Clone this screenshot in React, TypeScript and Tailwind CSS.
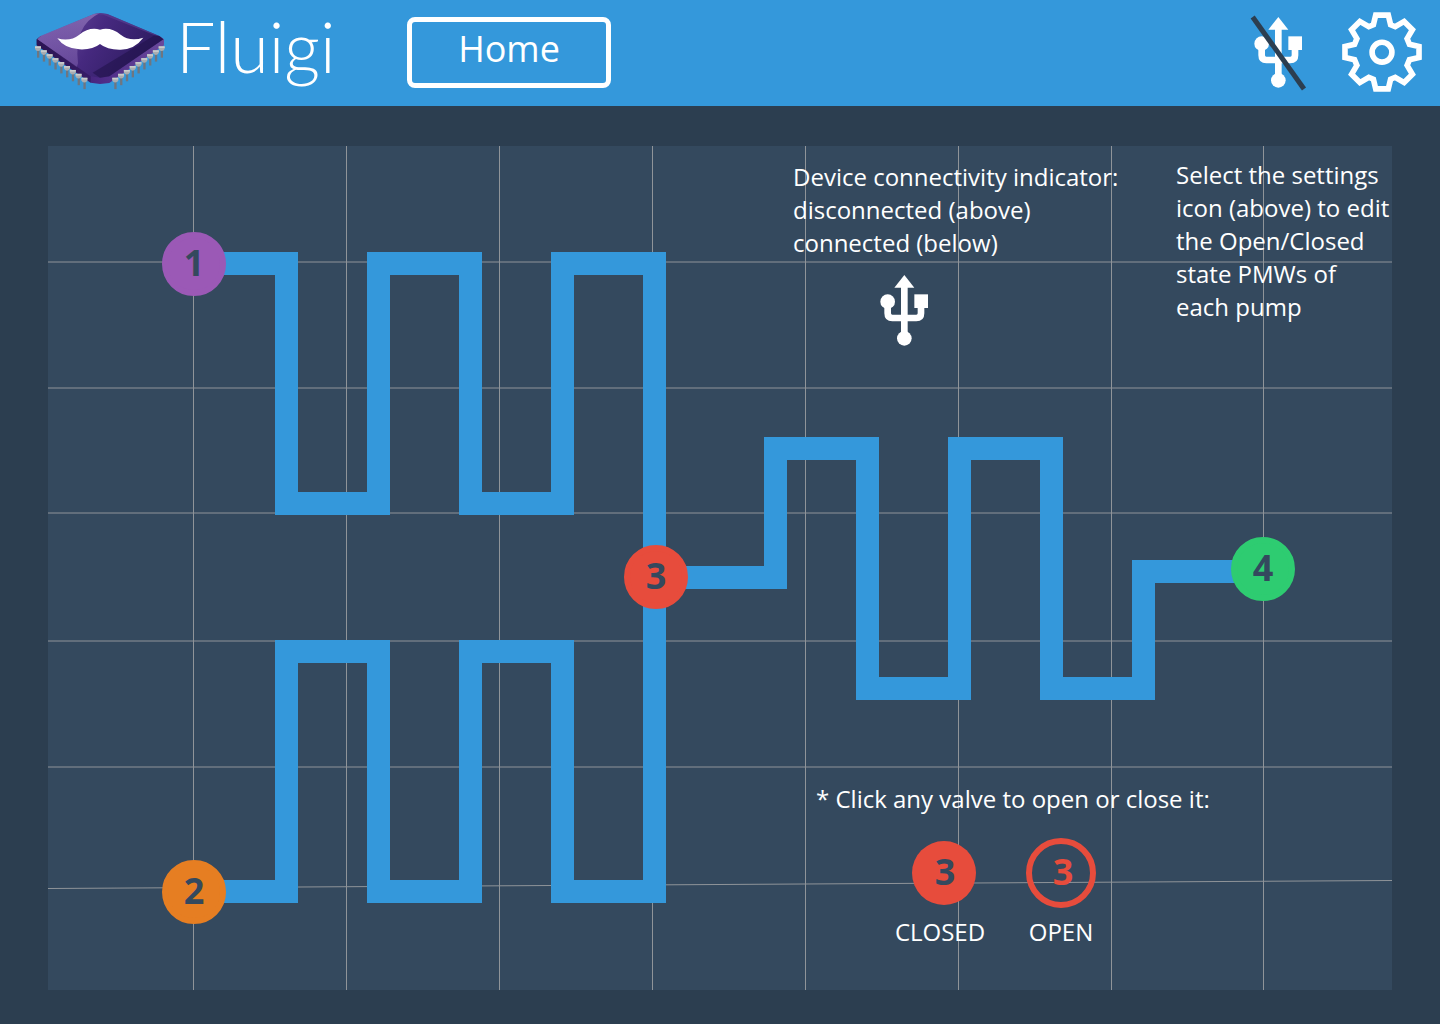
import { useState } from "react";

const pins = Array.from({ length: 9 }, (_, i) => i);

function Pin({ x, y }: { x: number; y: number }) {
  return (
    <g transform={`translate(${x} ${y})`}>
      <path d="M-3 4h7v23h-7z" fill="#6f7680" />
      <path d="M-9 -7h18v7q-2 7-9 7t-9-7z" fill="#a9adb1" />
      <path d="M-9 -7h18v5h-18z" fill="#c9cccd" />
    </g>
  );
}

function ChipLogo() {
  return (
    <svg viewBox="0 0 480 318" className="h-[106px] w-[160px] shrink-0 self-start" aria-hidden="true">
      <defs>
        <linearGradient id="top" x1="0" y1="0.3" x2="1" y2="0.6">
          <stop offset="0" stopColor="#6b4c9f" />
          <stop offset="0.45" stopColor="#46297f" />
          <stop offset="1" stopColor="#2a1a5c" />
        </linearGradient>
        <linearGradient id="shine" x1="1" y1="0" x2="0.2" y2="0.9">
          <stop offset="0" stopColor="#a58bc9" stopOpacity="0.6" />
          <stop offset="1" stopColor="#8d6dba" stopOpacity="0.35" />
        </linearGradient>
        <linearGradient id="side" x1="0" y1="0" x2="1" y2="0">
          <stop offset="0" stopColor="#2b1452" />
          <stop offset="0.5" stopColor="#4c2a86" />
          <stop offset="1" stopColor="#6a4a9c" />
        </linearGradient>
      </defs>
      <path d="M50 118L62 108H418L432 118V136L268 249L240 252L212 248L50 136z" fill="url(#side)" />
      <path d="M62 108L222 42L240 39L262 42L418 108L430 118L268 229L240 233L212 229L52 118z" fill="url(#top)" />
      <path d="M62 108L222 42L240 39Q160 76 174 190L170 202L52 118z" fill="url(#shine)" />
      <path d="M430 118L268 229L240 233L218 218L404 106L418 108z" fill="#21124b" opacity="0.6" />
      <path d="M222 42L240 39L262 42L418 108L404 106L250 44z" fill="#5b4296" opacity="0.6" />
      <path d="M50 118L212 229V248L50 136z" fill="#2b1556" opacity="0.55" />
      {pins.map((i) => (
        <g key={i}>
          <Pin x={54 + i * 17.4} y={146 + i * 11.8} />
          <Pin x={425 - i * 17.4} y={146 + i * 11.8} />
        </g>
      ))}
      <path d="M112 115Q150 126 178 104Q208 80 240 89Q272 80 302 104Q330 126 370 113Q344 148 302 149Q262 150 240 132Q218 150 178 148Q134 146 112 115z" fill="#fff" />
    </svg>
  );
}

function UsbIcon({ off = false }: { off?: boolean }) {
  return (
    <svg viewBox="300 375 144 213" className="h-[71px] w-12 overflow-visible" aria-hidden="true">
      <path d="M373 375L403 413H343z" fill="#fff" />
      <path d="M373 405V560M323 460V490Q323 504 337 504H409Q423 504 423 490V460" fill="none" stroke="#fff" strokeWidth="20" />
      <circle cx="323" cy="455" r="22" fill="#fff" />
      <path d="M403 433h41v41h-41z" fill="#fff" />
      <circle cx="373" cy="565" r="22" fill="#fff" />
      {off && <path d="M296 375L450 591" stroke="#2c3e50" strokeWidth="15" />}
    </svg>
  );
}

function GearIcon() {
  return (
    <svg viewBox="306 36 242 241" className="size-20" fill="none" stroke="#fff" strokeWidth="17" aria-hidden="true">
      <path d="M408 45H446L453 74L467 80L494 64L519 89L503 116L510 133L539 140V173L510 180L503 197L519 224L494 249L467 233L453 239L446 268H408L401 239L387 233L360 249L335 224L351 197L344 180L315 173V140L344 133L351 116L335 89L360 64L387 80L401 74z" />
      <circle cx="427" cy="157" r="30" />
    </svg>
  );
}

const valves = [
  { id: 1, x: 194, y: 264, fill: "border-[#9b59b6] bg-[#9b59b6]", open: "border-[#9b59b6] text-[#9b59b6]" },
  { id: 2, x: 194, y: 892, fill: "border-[#e67e22] bg-[#e67e22]", open: "border-[#e67e22] text-[#e67e22]" },
  { id: 3, x: 656, y: 577, fill: "border-[#e74c3c] bg-[#e74c3c]", open: "border-[#e74c3c] text-[#e74c3c]" },
  { id: 4, x: 1263, y: 569, fill: "border-[#2ecc71] bg-[#2ecc71]", open: "border-[#2ecc71] text-[#2ecc71]" },
];

const columns = [193.5, 346.5, 499.5, 652.5, 805.5, 958.5, 1111.5, 1263.5];
const rows = [262, 388, 513, 641, 767];

function Diagram() {
  return (
    <svg viewBox="48 146 1344 844" className="block h-auto w-full" fill="none" aria-hidden="true">
      <g stroke="#8f9499">
        {columns.map((x) => (
          <path key={x} d={`M${x} 146V990`} />
        ))}
        {rows.map((y) => (
          <path key={y} d={`M48 ${y}H1392`} />
        ))}
        <path d="M48 888.500L1392 880.500" />
      </g>
      <g stroke="#3498db" strokeWidth="23">
        <path d="M194 263.500H286.500V503.500H378.500V263.500H470.500V503.500H562.500V263.500H654.500V891.500H562.500V651.500H470.500V891.500H378.500V651.500H286.500V891.500H194" />
        <path d="M656 577.500H775.500V448.500H867.500V688.500H959.500V448.500H1051.500V688.500H1143.500V571.500H1263" />
      </g>
    </svg>
  );
}

export default function App() {
  const [opened, setOpened] = useState<number[]>([]);
  const toggle = (id: number) =>
    setOpened((list) => (list.includes(id) ? list.filter((n) => n !== id) : [...list, id]));

  return (
    <div className="min-h-screen bg-[#2c3e50] font-['Open_Sans',sans-serif] text-2xl leading-[33px] text-white">
      <header className="flex h-[106px] items-center bg-[#3498db] pr-[18px] pb-0.5 pl-5">
        <ChipLogo />
        <h1 className="w-[227px] pb-3 font-['Lato',sans-serif] text-[70px] leading-none font-light">
          <span className="-ml-1">Fluigi</span>
        </h1>
        <button type="button" className="h-[71px] w-[204px] rounded-lg border-5 border-white pb-1.5 text-4xl">
          Home
        </button>
        <div className="ml-auto flex items-center gap-10">
          <button type="button" aria-label="Device disconnected">
            <UsbIcon off />
          </button>
          <button type="button" aria-label="Settings">
            <GearIcon />
          </button>
        </div>
      </header>

      <main className="px-12 pt-10 pb-[34px]">
        <div className="relative grid bg-[#34495e]">
          <div className="col-start-1 row-start-1">
            <Diagram />
          </div>
          <div className="col-start-1 row-start-1 flex flex-col items-end justify-between pt-3 pb-[42px]">
            <div className="flex items-start">
              <section className="w-[383px] pt-0.5">
                <p>
                  Device connectivity indicator:
                  <br />
                  disconnected (above)
                  <br />
                  connected (below)
                </p>
                <div className="mt-4 ml-[87px]">
                  <UsbIcon />
                </div>
              </section>
              <p className="w-[216px]">Select the settings icon (above) to edit the Open/Closed state PMWs of each pump</p>
            </div>
            <section className="flex w-[576px] flex-col items-start">
              <p>* Click any valve to open or close it:</p>
              <div className="mt-[23px] ml-[76px] flex gap-[30px]">
                <figure className="flex w-[104px] flex-col items-center gap-[7px]">
                  <span className="flex h-[70px] items-center">
                    <span className="flex size-16 items-center justify-center rounded-full bg-[#e74c3c] pb-0.5 pl-0.5 text-4xl font-bold text-[#34495e]">3</span>
                  </span>
                  <figcaption className="pr-2">CLOSED</figcaption>
                </figure>
                <figure className="flex flex-col items-center gap-[7px]">
                  <span className="flex size-[70px] items-center justify-center rounded-full border-6 border-[#e74c3c] pb-0.5 pl-1 text-4xl font-bold text-[#e74c3c]">3</span>
                  <figcaption>OPEN</figcaption>
                </figure>
              </div>
            </section>
          </div>
          {valves.map((v) => (
            <button
              key={v.id}
              type="button"
              aria-pressed={opened.includes(v.id)}
              onClick={() => toggle(v.id)}
              className={`absolute flex size-16 -translate-1/2 items-center justify-center rounded-full border-6 pb-0.5 text-4xl font-bold ${
                opened.includes(v.id) ? v.open : `text-[#34495e] ${v.fill}`
              }`}
              style={{ left: `${((v.x - 48) / 1344) * 100}%`, top: `${((v.y - 146) / 844) * 100}%` }}
            >
              {v.id}
            </button>
          ))}
        </div>
      </main>
    </div>
  );
}
